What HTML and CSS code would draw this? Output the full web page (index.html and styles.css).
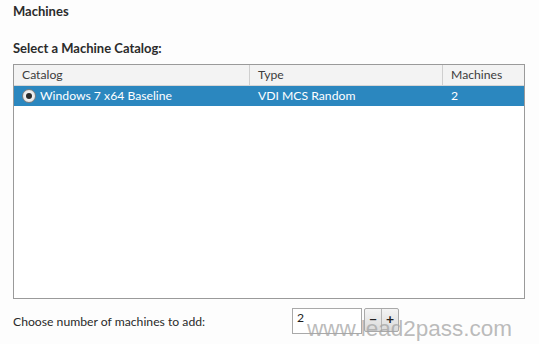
FILE: index.html
```html
<!DOCTYPE html>
<html lang="en">
<head>
    <meta charset="UTF-8">
    <title>Machines</title>
    <link rel="stylesheet" href="styles.css">
</head>
<body>
    <div class="page">
        <h1 class="title">Machines</h1>
        <h2 class="label">Select a Machine Catalog:</h2>
        <div class="grid">
            <div class="row head">
                <div class="cell c1">Catalog</div>
                <div class="cell c2">Type</div>
                <div class="cell c3">Machines</div>
            </div>
            <div class="row selected">
                <div class="cell c1"><span class="radio"></span>Windows 7 x64 Baseline</div>
                <div class="cell c2">VDI MCS Random</div>
                <div class="cell c3">2</div>
            </div>
        </div>
        <div class="count">
            <span class="count-label">Choose number of machines to add:</span>
            <div class="spinner">
                <div class="num">2</div>
                <div class="btns">
                    <span class="btn">&minus;</span>
                    <span class="btn">+</span>
                </div>
            </div>
        </div>
        <span class="watermark">www.lead2pass.com</span>
    </div>
</body>
</html>
```

FILE: styles.css
```css
body {
    margin: 0;
    background-color: #fdfdfd;
    font-family: Lato, "Open Sans", sans-serif;
    font-size: 12.2px;
    color: #1e1e1e;
}
.page {
    width: 539px;
    height: 344px;
    padding: 0 14px 0 13px;
    box-sizing: border-box;
    position: relative;
}
.title {
    margin: 0;
    padding-top: 3px;
    font-size: 13px;
    font-weight: 700;
    line-height: 17px;
    color: #2b2b2b;
}
.label {
    margin: 0;
    padding-top: 20px;
    font-size: 13px;
    font-weight: 700;
    line-height: 17px;
    color: #2b2b2b;
}
.grid {
    margin-top: 7px;
    height: 233px;
    border: 1px solid #9a9a9a;
    background: #ffffff;
}
.row {
    display: flex;
    height: 20px;
    line-height: 20px;
}
.head {
    background: #f3f3f3;
    border-bottom: 1px solid #d6d6d6;
    color: #3c3c3c;
}
.head .cell {
    border-right: 1px solid #cfcfcf;
}
.head .c3 {
    border-right: none;
}
.cell {
    box-sizing: border-box;
    padding-left: 8px;
}
.c1 { width: 236px; }
.c2 { width: 193px; }
.c3 { flex: 1; }
.selected {
    background: #2b87bf;
    color: #ffffff;
}
.selected .c1 {
    padding-left: 8px;
    display: flex;
    align-items: center;
}
.radio {
    width: 14px;
    height: 14px;
    border-radius: 50%;
    background: radial-gradient(#ffffff, #dcdcdc);
    border: 1px solid #7d7d7d;
    box-sizing: border-box;
    margin-right: 4px;
    display: flex;
    align-items: center;
    justify-content: center;
}
.radio::after {
    content: "";
    width: 6px;
    height: 6px;
    border-radius: 50%;
    background: #2a2a2a;
}
.count {
    display: flex;
    align-items: center;
    margin-top: 9px;
}
.count-label {
    width: 279px;
    color: #2a2a2a;
}
.spinner {
    display: flex;
    align-items: flex-start;
}
.num {
    width: 70px;
    height: 26px;
    border: 1px solid #a9a9a9;
    box-sizing: border-box;
    background: #ffffff;
    padding-left: 4px;
    line-height: 18px;
}
.btns {
    display: flex;
    margin-left: 2px;
    border: 1px solid #a9a9a9;
    border-radius: 2px;
    background: linear-gradient(#f4f4f4, #dadada);
}
.btn {
    width: 16px;
    height: 22px;
    line-height: 20px;
    text-align: center;
    font-weight: 700;
    font-size: 14px;
    color: #222;
}
.btn + .btn {
    border-left: 1px solid #b5b5b5;
}
.watermark {
    position: absolute;
    left: 307px;
    top: 317px;
    font-family: "Liberation Sans", Arial, sans-serif;
    font-size: 22.5px;
    line-height: 23px;
    color: rgba(165, 165, 165, 0.75);
}
```
